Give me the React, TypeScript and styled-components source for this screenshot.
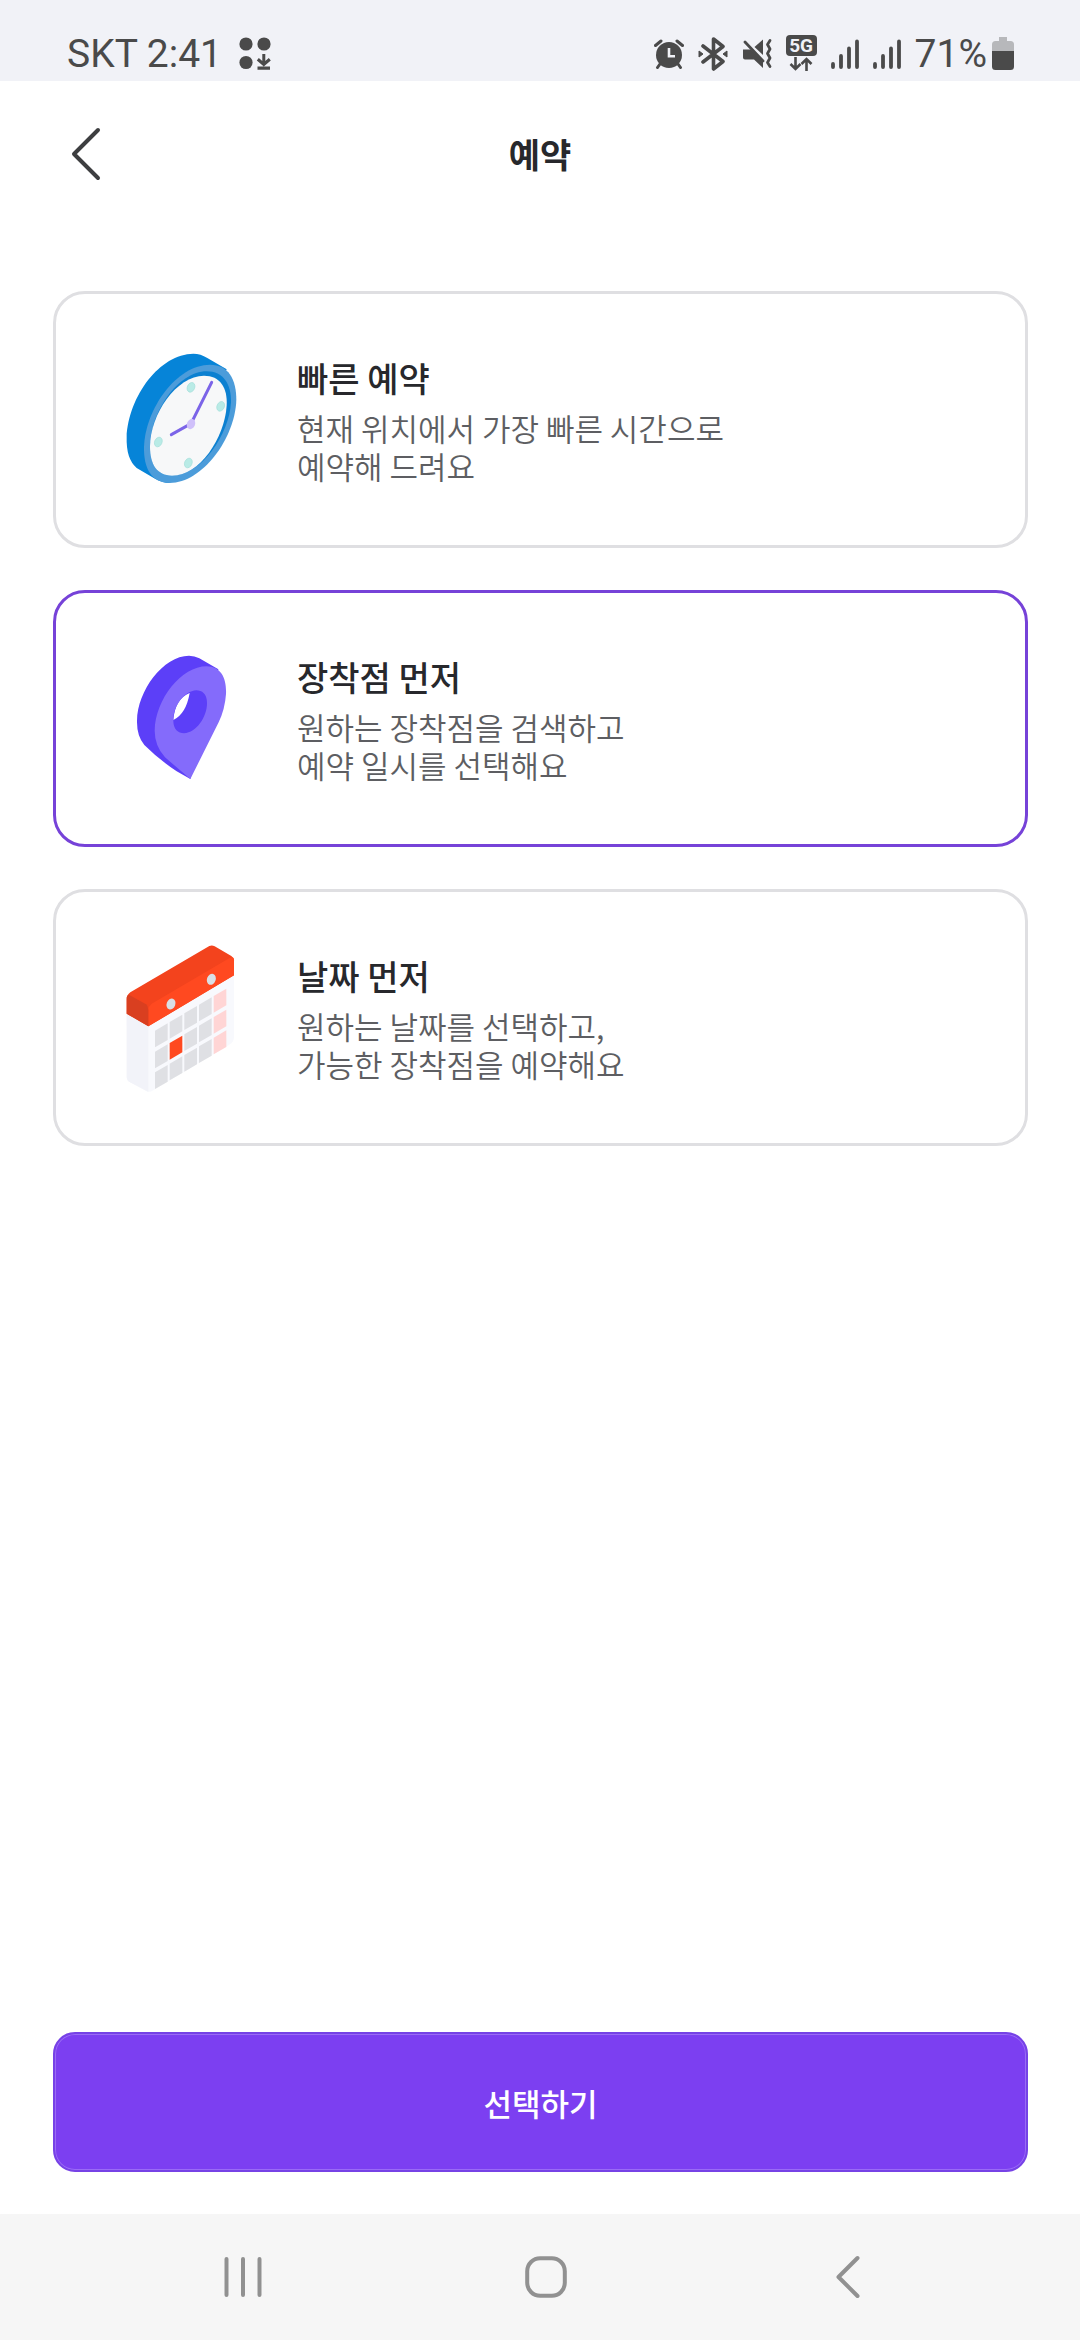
import React, { useState } from "react";
import styled, { createGlobalStyle } from "styled-components";

const GlobalStyle = createGlobalStyle`
  * { box-sizing: border-box; }
  body { margin: 0; background: #fff; font-family: "Noto Sans CJK KR", "Noto Sans", sans-serif; }
  button { margin: 0; padding: 0; border: 0; background: none; font: inherit; cursor: pointer; }
  svg { display: block; flex: none; }
`;

const Page = styled.div`
  display: flex;
  flex-direction: column;
  min-height: 100vh;
`;

const StatusBar = styled.header`
  display: flex;
  align-items: center;
  justify-content: space-between;
  height: 81px;
  padding: 26px 66px 0 67px;
  background: #f1f2f7;
  color: #4a4a4a;
  font-family: Roboto, sans-serif;
  font-size: 39px;
  line-height: 54px;
`;

const StatusGroup = styled.div<{ $gap: number }>`
  display: flex;
  align-items: center;
  gap: ${(p) => p.$gap}px;
`;

const Battery = styled.div`
  display: flex;
  align-items: center;
  gap: 5px;
`;

const TitleBar = styled.div`
  display: grid;
  grid-template-columns: 60px 1fr 60px;
  align-items: center;
  height: 146px;
  padding: 0 56px;
`;

const BackButton = styled.button`
  display: grid;
  place-items: center;
  height: 80px;
`;

const Title = styled.h1`
  margin: 0;
  color: #27282c;
  font-size: 34px;
  font-weight: 700;
  line-height: 48px;
  text-align: center;
`;

const Options = styled.fieldset`
  display: flex;
  flex: 1;
  flex-direction: column;
  gap: 42px;
  min-width: 0;
  margin: 0;
  padding: 64px 52px 0 53px;
  border: 0;
`;

const Radio = styled.input`
  position: absolute;
  width: 1px;
  height: 1px;
  margin: 0;
  opacity: 0;
`;

const OptionCard = styled.label<{ $selected: boolean }>`
  display: flex;
  align-items: center;
  gap: 37px;
  height: 257px;
  padding: 0 44px;
  border: 3px solid ${(p) => (p.$selected ? "#7642d8" : "#dfdfe2")};
  border-radius: 32px;
  cursor: pointer;
`;

const OptionText = styled.div`
  display: flex;
  flex-direction: column;
  gap: 7px;
`;

const OptionTitle = styled.span`
  color: #27282c;
  font-size: 34px;
  font-weight: 500;
  line-height: 48px;
`;

const OptionNote = styled.span`
  color: #5d5e62;
  font-size: 31px;
  font-weight: 350;
  line-height: 38px;
  white-space: pre-line;
`;

const Footer = styled.footer`
  display: flex;
  padding: 42px 52px 42px 53px;
`;

const SelectButton = styled.button`
  flex: 1;
  height: 140px;
  border: 2px solid #7642e6;
  border-radius: 22px;
  background: #7c3ff1;
  box-shadow: inset 0 0 0 1px #9a6bf5;
  color: #fff;
  font-size: 31px;
  font-weight: 500;
`;

const NavBar = styled.nav`
  display: flex;
  align-items: center;
  justify-content: space-between;
  height: 126px;
  padding: 0 172px 0 183px;
  background: #f6f6f6;
`;

const NavButton = styled.button`
  display: grid;
  place-items: center;
  width: 120px;
  height: 100px;
`;

const ink = "#4a4a4a";

const AppsIcon = () => (
  <svg width="32" height="34" viewBox="0 0 32 34" fill={ink}>
    <circle cx="7" cy="7" r="6.6" />
    <circle cx="25" cy="7" r="6.6" />
    <circle cx="7" cy="25.5" r="6.6" />
    <path d="M23.3 17h3v7l3.500-3 2 2.400-7 6-7-6 2-2.400 3.500 3zM18.500 29.500h12.500v3.200H18.500z" />
  </svg>
);

const AlarmIcon = () => (
  <svg width="30" height="30" viewBox="0 0 30 30" fill="none">
    <circle cx="15" cy="16" r="13" fill={ink} />
    <path d="M1.5 6.5L7 2M28.5 6.5L23 2" stroke={ink} strokeWidth="3" strokeLinecap="round" />
    <path d="M6 25L3.5 28.5M24 25L26.5 28.5" stroke={ink} strokeWidth="3" strokeLinecap="round" />
    <path d="M15 9v8.2h6" stroke="#f1f2f7" strokeWidth="2.6" />
  </svg>
);

const BluetoothIcon = () => (
  <svg width="30" height="34" viewBox="0 0 30 34" fill="none">
    <path d="M5 9l20 15.5-9.5 7.5V2L25 9.5 5 25" stroke={ink} strokeWidth="3.6" strokeLinejoin="round" strokeLinecap="round" />
    <path d="M1 14l4 3L1 20zM29 14l-4 3 4 3z" fill={ink} stroke={ink} />
  </svg>
);

const MuteIcon = () => (
  <svg width="30" height="32" viewBox="0 0 30 32" fill="none">
    <path d="M1 11.5h8l5 5 7 7V30l-9-8.5H3a2 2 0 0 1-2-2z" fill={ink} />
    <path d="M12.5 9L21 1.5V17z" fill={ink} />
    <path d="M3 4l18 19" stroke={ink} strokeWidth="2.8" strokeLinecap="round" />
    <path d="M28 2.5l-2.5 4 2.5 4.5-2.5 4.5 2.5 4.5-2.5 4.5 2.5 4" stroke={ink} strokeWidth="2.8" strokeLinejoin="round" strokeLinecap="round" />
  </svg>
);

const FiveGBadge = styled.div`
  display: flex;
  flex-direction: column;
  align-items: center;
  width: 31px;
  padding-bottom: 2px;
`;

const FiveGLabel = styled.span`
  width: 31px;
  height: 21px;
  border-radius: 4px;
  background: ${ink};
  color: #f1f2f7;
  font-size: 19px;
  font-weight: 700;
  line-height: 21px;
  text-align: center;
`;

const FiveGIcon = () => (
  <FiveGBadge>
    <FiveGLabel>5G</FiveGLabel>
    <svg width="24" height="15" viewBox="0 0 24 15" fill="none" stroke={ink} strokeWidth="2.6">
      <path d="M6.5 1v12M1.5 8l5 5 5-5M17.5 15V3M12.500 8l5-5 5 5" />
    </svg>
  </FiveGBadge>
);

const SignalIcon = () => (
  <svg width="28" height="30" viewBox="0 0 28 30" stroke={ink} strokeWidth="3.8" strokeLinecap="round">
    <path d="M2 25v3M10 17v11M18 9.5v18.5M26 2.5v25.5" />
  </svg>
);

const BatteryIcon = () => (
  <svg width="22" height="33" viewBox="0 0 22 33">
    <path d="M7 0h8v4h3.5A3.5 3.5 0 0 1 22 7.5V15H0V7.5A3.5 3.5 0 0 1 3.5 4H7z" fill="#b7b8bb" />
    <path d="M0 14h22v15.5a3.5 3.5 0 0 1-3.5 3.5h-15A3.5 3.5 0 0 1 0 29.5z" fill={ink} />
  </svg>
);

const BackIcon = () => (
  <svg width="30" height="54" viewBox="0 0 30 54" fill="none">
    <path d="M27 3L3 27l24 24" stroke="#3d3e40" strokeWidth="4" strokeLinecap="round" strokeLinejoin="round" />
  </svg>
);

const ClockArt = () => (
  <svg width="160" height="170" viewBox="0 13 480 510">
    <path d="M80 320C86 195 180 70 280 69Q302 69 322 82L380 116L210 457Q185 456 165 444L110 412Q78 385 80 320Z" fill="#0684d8" />
    <path d="M132 350C135 235 230 102 330 102C385 102 409 145 409 208C405 325 305 458 208 457C155 456 131 415 132 350Z" fill="#4c9cda" />
    <path d="M150 348C150 245 235 122 320 122C370 122 394 160 393 215C388 310 305 435 216 435C170 434 150 400 150 348Z" fill="#0b80d1" />
    <path d="M150 348C150 250 230 135 312 135C360 135 383 170 380 225C374 320 300 435 216 435C170 434 150 400 150 348Z" fill="#f7f8f9" />
    <g fill="#b9ebe6" stroke="#a5deda" strokeWidth="2">
      <ellipse cx="273" cy="170" rx="11" ry="15" transform="rotate(24 273 170)" />
      <ellipse cx="362" cy="227" rx="11" ry="15" transform="rotate(24 362 227)" />
      <ellipse cx="175" cy="334" rx="11" ry="15" transform="rotate(24 175 334)" />
      <ellipse cx="265" cy="397" rx="11" ry="15" transform="rotate(24 265 397)" />
    </g>
    <path d="M214 312L273 279L335 155" fill="none" stroke="#7b64e8" strokeWidth="9" strokeLinecap="round" />
    <ellipse cx="273" cy="280" rx="12" ry="16" transform="rotate(24 273 280)" fill="#cfc0fa" />
  </svg>
);

const PinArt = () => (
  <svg width="160" height="170" viewBox="-30 10 480 510">
    <path d="M81 270C82 180 160 75 237 75Q254 75 268 83L325 116L300 240L241 445L200 422Q145 385 103 343Q80 315 81 270ZM190 268Q228 250 239 187Q195 205 190 268Z" fill="#5c3ff8" fillRule="evenodd" />
    <path d="M241 445L165 380Q134 345 134 300C136 205 215 107 290 107C335 108 350 145 348 190Q345 235 326 275ZM190 268C189 295 204 308 222 308C260 306 292 257 291 216C291 190 276 179 259 179C222 181 190 227 190 268Z" fill="#846bfb" fillRule="evenodd" />
  </svg>
);

const DAY_COLUMNS = [165, 209, 253, 297, 341];
const DAY_ROWS = [321, 384, 446];

const CalendarArt = () => (
  <svg width="160" height="190" viewBox="0 8 480 570">
    <path d="M80 280L145 316L402 165V350Q402 364 390 372L160 510Q148 518 138 512L90 486Q80 480 80 470Z" fill="#f8f9fd" />
    <path d="M80 280L145 316V514L90 486Q80 480 80 470Z" fill="#f2f3f9" />
    <path d="M80 236Q80 224 91 216L328 77Q336 73 344 78L394 107Q402 112 402 120V165L145 318L80 280Z" fill="#f3431d" />
    <path d="M145 268Q145 258 155 250L390 112Q402 107 402 120V165L145 318Z" fill="#ff4920" />
    <path d="M80 232Q81 222 88 224L138 252Q145 257 145 268V318L80 280Z" fill="#d93f20" />
    <ellipse cx="213" cy="251" rx="13" ry="17" transform="rotate(20 213 251)" fill="#d9dfe4" />
    <ellipse cx="334" cy="177" rx="13" ry="17" transform="rotate(20 334 177)" fill="#d9dfe4" />
    {DAY_ROWS.map((rowY, row) =>
      DAY_COLUMNS.map((x, col) => {
        const y = rowY + 10 - col * 26;
        const fill = col === 4 ? "#ffd5d5" : row === 1 && col === 1 ? "#ff4920" : "#dfe0e4";
        return <path key={`${row}-${col}`} d={`M${x} ${y}l38 -22v50l-38 22z`} fill={fill} />;
      }),
    )}
  </svg>
);

const RecentsIcon = () => (
  <svg width="40" height="46" viewBox="0 0 40 46" stroke="#919191" strokeWidth="4" strokeLinecap="round">
    <path d="M3.5 5v36M20 5v36M36.5 5v36" />
  </svg>
);

const HomeIcon = () => (
  <svg width="42" height="42" viewBox="0 0 42 42" fill="none">
    <rect x="2.2" y="2.2" width="37.6" height="37.6" rx="13" stroke="#919191" strokeWidth="4" />
  </svg>
);

const NavBackIcon = () => (
  <svg width="26" height="44" viewBox="0 0 26 44" fill="none">
    <path d="M22.5 3L3.5 22l19 19" stroke="#919191" strokeWidth="4" strokeLinecap="round" strokeLinejoin="round" />
  </svg>
);

const OPTIONS = [
  { id: "fast", title: "빠른 예약", note: "현재 위치에서 가장 빠른 시간으로\n예약해 드려요", Art: ClockArt },
  { id: "store", title: "장착점 먼저", note: "원하는 장착점을 검색하고\n예약 일시를 선택해요", Art: PinArt },
  { id: "date", title: "날짜 먼저", note: "원하는 날짜를 선택하고,\n가능한 장착점을 예약해요", Art: CalendarArt },
];

export default function App() {
  const [selected, setSelected] = useState("store");
  return (
    <Page>
      <GlobalStyle />
      <StatusBar>
        <StatusGroup $gap={17}>
          <span>SKT 2:41</span>
          <AppsIcon />
        </StatusGroup>
        <StatusGroup $gap={14}>
          <AlarmIcon />
          <BluetoothIcon />
          <MuteIcon />
          <FiveGIcon />
          <SignalIcon />
          <SignalIcon />
          <Battery>
            <span>71%</span>
            <BatteryIcon />
          </Battery>
        </StatusGroup>
      </StatusBar>
      <TitleBar>
        <BackButton type="button" aria-label="뒤로">
          <BackIcon />
        </BackButton>
        <Title>예약</Title>
      </TitleBar>
      <Options aria-label="예약">
        {OPTIONS.map(({ id, title, note, Art }) => (
          <OptionCard key={id} $selected={selected === id}>
            <Radio type="radio" name="booking" checked={selected === id} onChange={() => setSelected(id)} />
            <Art />
            <OptionText>
              <OptionTitle>{title}</OptionTitle>
              <OptionNote>{note}</OptionNote>
            </OptionText>
          </OptionCard>
        ))}
      </Options>
      <Footer>
        <SelectButton type="button">선택하기</SelectButton>
      </Footer>
      <NavBar>
        <NavButton type="button" aria-label="최근 앱">
          <RecentsIcon />
        </NavButton>
        <NavButton type="button" aria-label="홈">
          <HomeIcon />
        </NavButton>
        <NavButton type="button" aria-label="이전">
          <NavBackIcon />
        </NavButton>
      </NavBar>
    </Page>
  );
}
